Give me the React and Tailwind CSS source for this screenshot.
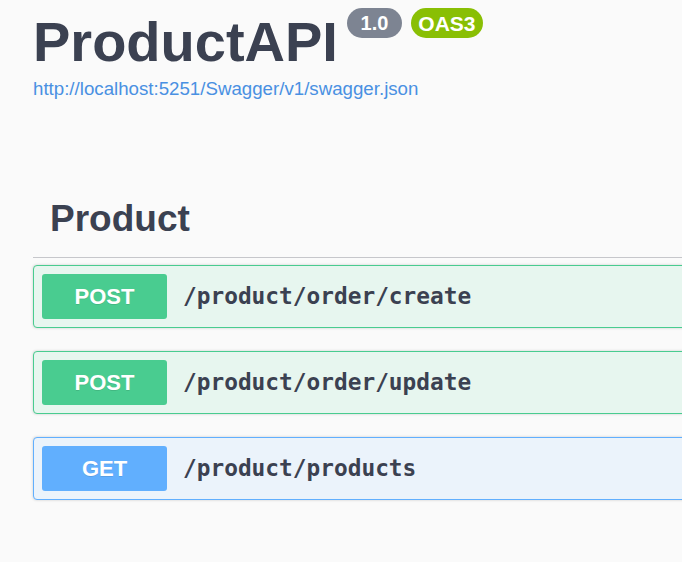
import React from "react";

const sans = { fontFamily: '"Liberation Sans", Arial, sans-serif' };

function Op({ method, path, kind }) {
  const isGet = kind === "get";
  return (
    <div
      className={
        "flex items-center gap-[16px] rounded-[4px] border p-[8px] shadow-[0_0_3px_rgba(0,0,0,0.19)] " +
        (isGet ? "border-[#61affe] bg-[#ebf3fb]" : "border-[#49cc90] bg-[#e7f6ef]")
      }
    >
      <div
        className={
          "flex h-[45px] w-[125px] items-center justify-center rounded-[3px] text-[22px] font-bold text-white text-shadow-[0_1px_0_rgba(0,0,0,0.1)] " +
          (isGet ? "bg-[#61affe]" : "bg-[#49cc90]")
        }
        style={sans}
      >
        {method}
      </div>
      <div
        className="text-[22.8px] font-bold text-[#3b4151]"
        style={{ fontFamily: '"DejaVu Sans Mono", monospace' }}
      >
        {path}
      </div>
    </div>
  );
}

export default function App() {
  return (
    <div className="h-[562px] w-[682px] overflow-hidden bg-[#fafafa]" style={sans}>
      <div className="w-[720px] pl-[33px]">
        <div className="flex items-start">
          <h2 className="ml-0 mt-[14px] text-[56px] font-bold leading-none text-[#3b4151]">
            ProductAPI
          </h2>
          <div className="ml-[9px] mt-[8px] flex gap-[9px]">
            <span className="flex h-[30px] w-[55px] items-center justify-center rounded-full bg-[#7d8492] text-[20px] font-bold leading-none text-white">
              1.0
            </span>
            <span className="flex h-[30px] w-[72px] items-center justify-center rounded-full bg-[#89bf04] text-[21px] font-bold leading-none text-white">
              OAS3
            </span>
          </div>
        </div>
        <a className="mt-[10px] block text-[18.7px] leading-none text-[#4990e2]">
          http://localhost:5251/Swagger/v1/swagger.json
        </a>

        <h3 className="ml-[17px] mt-[101px] text-[37px] font-bold leading-none text-[#3b4151]">
          Product
        </h3>
        <div className="mt-[20px] h-px bg-[#c6c7cb]" />
        <div className="mt-[7px] flex flex-col gap-[23px]">
          <Op method="POST" path="/product/order/create" kind="post" />
          <Op method="POST" path="/product/order/update" kind="post" />
          <Op method="GET" path="/product/products" kind="get" />
        </div>
      </div>
    </div>
  );
}
